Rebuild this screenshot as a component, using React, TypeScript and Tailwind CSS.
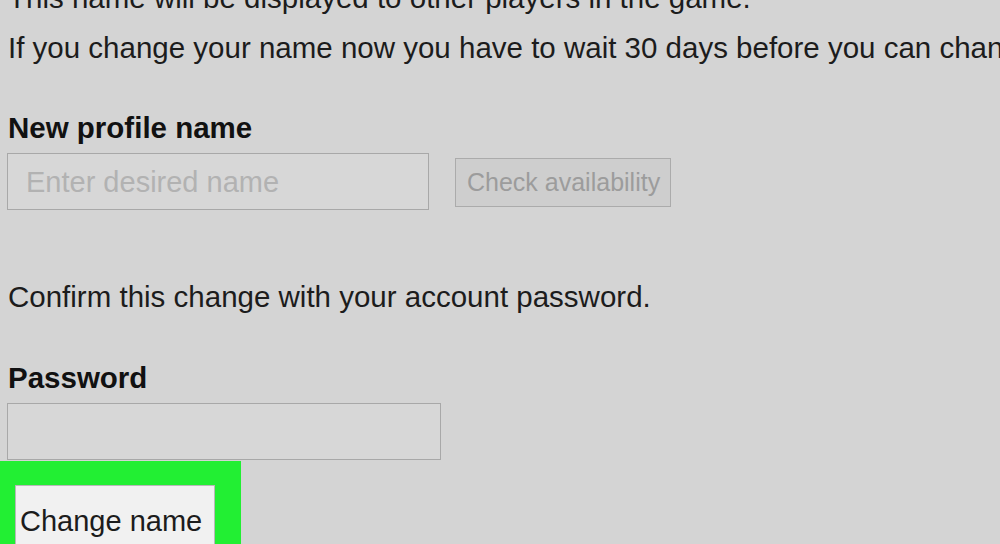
import React from 'react';

// Formulaire de changement de nom de profil (capture zoomée)
export default function App() {
  return (
    <div className="w-[1000px] h-[544px] overflow-hidden bg-[#d4d4d4] font-['Liberation_Sans',Arial,sans-serif] text-[#1c1c1c]">
      <div className="pl-2 mt-[-27px]">
        <p className="text-[29.5px] leading-[50px] whitespace-nowrap">
          This name will be displayed to other players in the game.
        </p>
        <p className="text-[29.5px] leading-[50px] whitespace-nowrap">
          If you change your name now you have to wait 30 days before you can change it again.
        </p>

        {/* Nouveau nom */}
        <h2 className="mt-[38px] text-[29.5px] leading-[34px] font-bold text-[#111]">New profile name</h2>
        <div className="mt-2 -ml-px flex items-start gap-[26px]">
          <div className="w-[422px] h-[57px] border border-[#a8a8a8] bg-[#d7d7d7] flex items-center pl-[18px] pt-[3px]">
            <span className="text-[29px] text-[#b2b2b2] whitespace-nowrap">Enter desired name</span>
          </div>
          <button className="mt-[5px] w-[216px] h-[49px] border border-[#ababab] bg-[#cecece] text-[25px] text-[#9c9c9c] pl-[11px] text-left">
            Check availability
          </button>
        </div>

        {/* Confirmation */}
        <p className="mt-[70px] text-[29.5px] leading-[34px] whitespace-nowrap">
          Confirm this change with your account password.
        </p>
        <h2 className="mt-[47px] text-[29.5px] leading-[34px] font-bold text-[#111]">Password</h2>
        <div className="mt-2 -ml-px w-[434px] h-[57px] border border-[#a8a8a8] bg-[#d7d7d7]" />

        {/* Bouton mis en évidence */}
        <div className="mt-px -ml-2 w-[241px] h-[90px] bg-[#22ef33] pt-6 pl-[15px]">
          <button className="w-[200px] h-[70px] border border-[#b8b8b8] bg-[#f1f1f1] text-left pl-1 pt-[18px] flex items-start">
            <span className="text-[29px] leading-[34px] text-[#1c1c1c] whitespace-nowrap">Change name</span>
          </button>
        </div>
      </div>
    </div>
  );
}
